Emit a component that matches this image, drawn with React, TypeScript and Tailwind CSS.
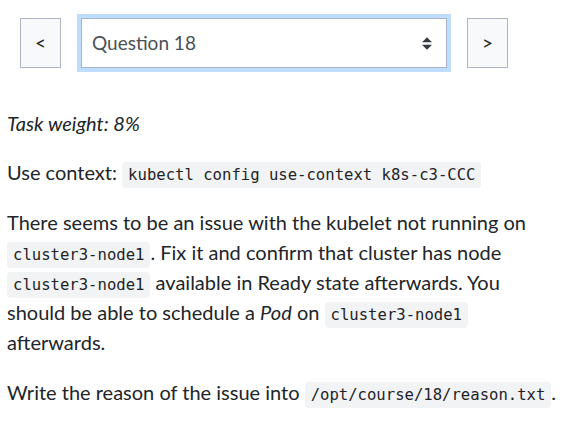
import { ChangeEvent, useState } from "react";

function Code({ children }: { children: string }) {
    return (
        <code className="rounded-[4px] bg-[#f1f3f4] px-[6px] py-[4px] text-[15.6px] leading-none text-[#1f2328] [font-family:'DejaVu_Sans_Mono','Liberation_Mono',monospace]">
            {children}
        </code>
    )
}

export default function App() {
    const [question, setQuestion] = useState("18")

    function pick(event: ChangeEvent<HTMLSelectElement>) {
        setQuestion(event.target.value)
    }

    return (
        <div className="bg-white min-h-[428px] px-[7px] pt-[18px] text-[#212529] [font-family:'Lato','Open_Sans',sans-serif]">
            <div className="flex gap-[20px] pl-[13px]">
                <button className="w-[41px] h-[50px] border border-[#adb5c5] bg-[#f8f9fa] text-[19px] text-[#212529]" type="button">&lt;</button>
                <div className="relative w-[366px] h-[50px] ring-4 ring-[#bfdeff]">
                    <select
                        value={question}
                        onChange={pick}
                        className="appearance-none w-full h-full border border-[#a9b6c8] bg-white pl-[10px] text-[19px] text-[#495057] outline-none"
                    >
                        {Array.from({ length: 30 }, (_, i) => (
                            <option key={i} value={String(i + 1)}>Question {i + 1}</option>
                        ))}
                    </select>
                    <svg className="pointer-events-none absolute right-[15px] top-[19px]" width="10" height="13" viewBox="0 0 4 5">
                        <path d="M2 0L0 2h4zm0 5L0 3h4z" fill="#343a40" />
                    </svg>
                </div>
                <button className="w-[41px] h-[50px] border border-[#adb5c5] bg-[#f8f9fa] text-[19px] text-[#212529]" type="button">&gt;</button>
            </div>

            <div className="mt-[40px] text-[20px] leading-[30px]">
                <p className="italic mb-[19px]">Task weight: 8%</p>
                <p className="mb-[20px]">Use context: <Code>kubectl config use-context k8s-c3-CCC</Code></p>
                <p className="mb-[20px]">
                    There seems to be an issue with the kubelet not running on <Code>cluster3-node1</Code>. Fix it and confirm that cluster has node <Code>cluster3-node1</Code> available in Ready state afterwards. You<br />
                    should be able to schedule a <em>Pod</em> on <Code>cluster3-node1</Code> afterwards.
                </p>
                <p>Write the reason of the issue into <Code>/opt/course/18/reason.txt</Code>.</p>
            </div>
        </div>
    )
}
